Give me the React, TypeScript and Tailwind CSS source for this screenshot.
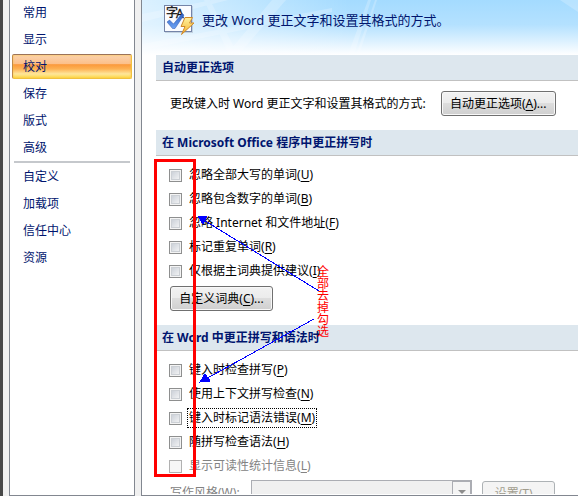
import React from 'react'
import clsx from 'clsx'

interface CheckOption {
  id: string
  label: string
  hotkey: string
  focused?: boolean
  disabled?: boolean
}

const mainPages = ['常用', '显示', '校对', '保存', '版式', '高级']
const extraPages = ['自定义', '加载项', '信任中心', '资源']

const officeOptions: CheckOption[] = [
  { id: 'uppercase', label: '忽略全部大写的单词', hotkey: 'U' },
  { id: 'numbers', label: '忽略包含数字的单词', hotkey: 'B' },
  { id: 'internet', label: '忽略 Internet 和文件地址', hotkey: 'F' },
  { id: 'repeated', label: '标记重复单词', hotkey: 'R' },
  { id: 'main-dictionary', label: '仅根据主词典提供建议', hotkey: 'I' },
]

const wordOptions: CheckOption[] = [
  { id: 'spelling', label: '键入时检查拼写', hotkey: 'P' },
  { id: 'context', label: '使用上下文拼写检查', hotkey: 'N' },
  { id: 'grammar', label: '键入时标记语法错误', hotkey: 'M', focused: true },
  { id: 'grammar-with-spelling', label: '随拼写检查语法', hotkey: 'H' },
  { id: 'readability', label: '显示可读性统计信息', hotkey: 'L', disabled: true },
]

const NavItem: React.FC<{ label: string; active?: boolean }> = ({ label, active }) => (
  <li>
    <button
      type="button"
      className={clsx(
        'block h-[25px] w-full rounded-[2px] border pl-[10px] text-left text-[#00156e]',
        active
          ? 'border-[#f0c040] border-t-[#9c7358] border-l-[#c08a4a] bg-[linear-gradient(#fbd3ae_0%,#fcc08a_38%,#fb9a3c_42%,#fdb052_60%,#fee69a_82%,#fdd94a_100%)] shadow-[inset_0_0_2px_#ffc42e]'
          : 'border-transparent',
      )}
    >
      {label}
    </button>
  </li>
)

const SectionTitle: React.FC<{ children: React.ReactNode }> = ({ children }) => (
  <h2 className="ml-[14px] flex h-[26px] items-center border-b border-[#c1c1c1] bg-[#dde7ee] pl-[6px] font-bold text-[#00156e]">
    {children}
  </h2>
)

const Hotkey: React.FC<{ letter: string }> = ({ letter }) => (
  <>
    (<span className="underline underline-offset-2">{letter}</span>)
  </>
)

const DialogButton: React.FC<{ label: string; hotkey: string; className: string; disabled?: boolean }> = ({
  label,
  hotkey,
  className,
  disabled,
}) => (
  <button
    type="button"
    disabled={disabled}
    className={clsx(
      'h-[25px] shrink-0 rounded-[3px] border whitespace-nowrap',
      disabled
        ? 'border-[#adb2b5] bg-[#f4f4f4] text-[#a19d8e]'
        : 'border-[#707070] bg-[linear-gradient(#f2f2f2_0%,#ebebeb_50%,#dddddd_50%,#cfcfcf_100%)] text-black shadow-[inset_0_0_0_1px_#f8f8f8]',
      className,
    )}
  >
    {label}
    <Hotkey letter={hotkey} />
    ...
  </button>
)

const CheckRow: React.FC<{ option: CheckOption }> = ({ option }) => (
  <li className="flex h-6 items-center pl-[27px]">
    <input
      id={option.id}
      type="checkbox"
      disabled={option.disabled}
      className={clsx(
        'size-[13px] shrink-0 appearance-none border',
        option.disabled
          ? 'border-[#b1b1b1] bg-[#f6f6f6]'
          : 'border-[#8e8f8f] bg-[linear-gradient(135deg,#c3c9d2,#fafafa)] shadow-[inset_0_0_0_1px_#f4f4f4,inset_0_0_0_2px_#ccd0d5]',
      )}
    />
    <label
      htmlFor={option.id}
      className={clsx(
        'ml-[5px] border border-dotted px-px leading-[18px] whitespace-nowrap',
        option.focused ? 'border-black' : 'border-transparent',
        option.disabled && 'text-[#838383]',
      )}
    >
      {option.label}
      <Hotkey letter={option.hotkey} />
    </label>
  </li>
)

const AutoCorrectIcon: React.FC = () => (
  <svg width="32" height="32" viewBox="0 0 32 32" className="shrink-0" aria-hidden="true">
    <defs>
      <linearGradient id="bolt" x1="0" y1="0" x2="0" y2="1">
        <stop offset="0" stopColor="#fff3a0" />
        <stop offset="1" stopColor="#f5b22c" />
      </linearGradient>
      <linearGradient id="check" x1="0" y1="0" x2="0" y2="1">
        <stop offset="0" stopColor="#2c5fc4" />
        <stop offset="1" stopColor="#6ea4f4" />
      </linearGradient>
    </defs>
    <rect x="1" y="2" width="28" height="27" fill="#8b94a6" opacity="0.35" />
    <rect x="0.5" y="1.5" width="27" height="26" fill="#fbfcff" stroke="#7484a8" />
    <text x="2" y="13" fontSize="12" fill="#111" stroke="#111" strokeWidth="0.3">
      字
    </text>
    <text x="12" y="14" fontSize="12" fill="#111" stroke="#111" strokeWidth="0.3">
      A
    </text>
    <path d="M3 18l2.5-2 4 4L18 9.500l2 1.500L11 24.500H8.500z" fill="url(#check)" stroke="#2c55ad" strokeWidth="0.5" />
    <path d="M21 13.500h7.500l-3 5.500h4.500L17.500 30.500l3.500-8h-4z" fill="url(#bolt)" stroke="#d08a28" strokeLinejoin="round" />
  </svg>
)

const Banner: React.FC = () => (
  <header className="relative flex h-[55px] shrink-0 items-start bg-[linear-gradient(#a4dbff_0%,#b4e1ff_45%,#dcf1ff_75%,#ffffff_100%)] pt-[4px] pl-[22px]">
    <svg
      className="absolute inset-0 size-full"
      viewBox="0 0 436 55"
      preserveAspectRatio="none"
      aria-hidden="true"
    >
      <defs>
        <linearGradient id="fade" x1="0" y1="0" x2="1" y2="0">
          <stop offset="0" stopColor="#fff" stopOpacity="0.6" />
          <stop offset="1" stopColor="#fff" stopOpacity="0" />
        </linearGradient>
      </defs>
      <rect width="210" height="55" fill="url(#fade)" />
      <g fill="#fff" opacity="0.22">
        <path d="M0 14L70 0h16L0 22z" />
        <path d="M62 0h6l28 55h-9z" />
        <path d="M130 0h14L96 55H84z" />
        <path d="M0 44L190 8v4L0 50z" />
        <path d="M226 0h3l-17 55h-6z" />
        <path d="M233 0h2l-18 55h-3z" />
        <path d="M418 0h18v12z" />
      </g>
    </svg>
    <div className="relative flex items-center gap-[6px] text-[#00156e]">
      <AutoCorrectIcon />
      <h1 className="text-[13px] whitespace-nowrap">更改 Word 更正文字和设置其格式的方式。</h1>
    </div>
  </header>
)

// Red frame and arrows drawn on top of the dialog
const Annotation: React.FC = () => (
  <div className="pointer-events-none absolute top-0 left-0">
    <svg width="340" height="490" viewBox="0 0 340 490" aria-hidden="true">
      <rect x="155.5" y="160.5" width="39" height="315" fill="none" stroke="#f00" strokeWidth="3" />
      <g stroke="#00f" fill="#00f" strokeWidth="1" shapeRendering="crispEdges">
        <path d="M319 291L202 219" fill="none" />
        <path d="M198 216h9l-4 8z" />
        <path d="M314 319L204 380" fill="none" />
        <path d="M200 382l5-8 5 7z" />
      </g>
    </svg>
    <p className="absolute top-[266px] left-[317px] w-3 text-[12px] leading-[12px] break-all text-[#f00]">
      全部去掉勾选
    </p>
  </div>
)

export default function App() {
  return (
    <div className="relative flex h-screen overflow-hidden bg-[#f0f0f0] font-['Noto_Sans','Noto_Sans_CJK_SC',sans-serif] text-[12px] leading-[18px] text-black">
      <div className="w-[3px] shrink-0 bg-[#484848]" />
      <nav className="ml-[6px] w-[126px] shrink-0 border-x border-b border-[#828790] bg-white px-[2px]">
        <ul className="flex flex-col gap-[2px]">
          {mainPages.map((page) => (
            <NavItem key={page} label={page} active={page === '校对'} />
          ))}
        </ul>
        <hr className="mx-[2px] mt-px border-t-2 border-[#c5c8cc]" />
        <ul className="mt-px flex flex-col gap-[2px]">
          {extraPages.map((page) => (
            <NavItem key={page} label={page} />
          ))}
        </ul>
      </nav>

      <main className="ml-[6px] flex min-w-0 flex-1 flex-col border-b border-l border-[#828790] bg-white pb-px">
        <div className="min-h-0 flex-1 overflow-hidden">
          <Banner />

          <SectionTitle>自动更正选项</SectionTitle>
          <div className="flex items-center gap-[15px] pt-[10px] pb-[14px] pl-[28px]">
            <span className="whitespace-nowrap">更改键入时 Word 更正文字和设置其格式的方式:</span>
            <DialogButton label="自动更正选项" hotkey="A" className="w-[115px]" />
          </div>

          <SectionTitle>在 Microsoft Office 程序中更正拼写时</SectionTitle>
          <ul className="pt-[7px]">
            {officeOptions.map((option) => (
              <CheckRow key={option.id} option={option} />
            ))}
          </ul>
          <div className="pt-[3px] pb-[14px] pl-[28px]">
            <DialogButton label="自定义词典" hotkey="C" className="w-[103px]" />
          </div>

          <SectionTitle>在 Word 中更正拼写和语法时</SectionTitle>
          <ul className="pt-[7px]">
            {wordOptions.map((option) => (
              <CheckRow key={option.id} option={option} />
            ))}
          </ul>
          <div className="flex items-start pt-[2px] pl-[28px]">
            <label htmlFor="writing-style" className="w-[81px] pt-[4px] whitespace-nowrap text-[#838383]">
              写作风格(<span className="underline underline-offset-2">W</span>):
            </label>
            <div className="relative">
              <select
                id="writing-style"
                disabled
                className="h-[24px] w-[221px] appearance-none border border-[#abadb3] bg-[#f0f0f0]"
              />
              <span className="absolute top-0 right-0 flex h-[24px] w-[20px] items-center justify-center border-2 border-l border-[#abadb3] bg-[#f4f4f4]">
                <span className="border-x-4 border-t-4 border-x-transparent border-t-[#8d8d8d]" />
              </span>
            </div>
            <DialogButton label="设置" hotkey="T" className="mt-px ml-[10px] w-[73px]" disabled />
          </div>
        </div>
      </main>

      <Annotation />
    </div>
  )
}
